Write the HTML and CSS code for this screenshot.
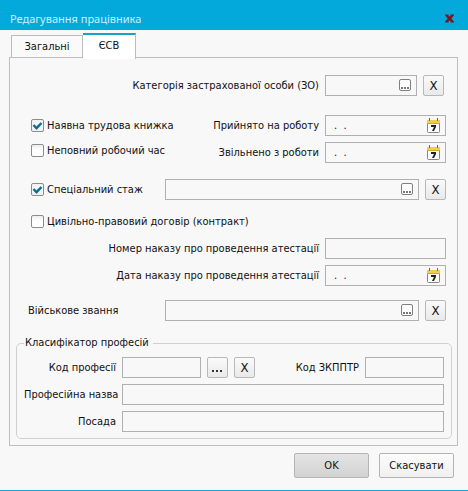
FILE: index.html
```html
<!DOCTYPE html>
<html lang="uk">
<head>
<meta charset="utf-8">
<title>Редагування працівника</title>
<link rel="stylesheet" href="styles.css">
</head>
<body>
<svg class="defs" aria-hidden="true">
  <symbol id="calendar" viewBox="0 0 14 17">
    <rect x="0.5" y="3.5" width="12" height="12" rx="1" fill="#fdfdfd" stroke="#858585"/>
    <path d="M0 3h13v3H0z" fill="#f0cc50"/>
    <path d="M0 6h13v1H0z" fill="#d0a63a"/>
    <path d="M2 1h1v3H2zM10 1h1v3h-1z" fill="#75683f"/>
    <path d="M4 8h5v2L7 14H5l2-4H4z" fill="#222"/>
  </symbol>
  <symbol id="dots" viewBox="0 0 13 13">
    <rect x="0.5" y="0.5" width="11" height="11" rx="1.5" fill="#fdfdfd" stroke="#808080"/>
    <path d="M2 8h2v2H2zM5 8h2v2H5zM8 8h2v2H8z" fill="#777"/>
  </symbol>
</svg>
<form class="window">
  <header class="titlebar">
    <h1>Редагування працівника</h1>
    <button type="button" class="close" aria-label="Закрити"><svg viewBox="0 0 10 9"><path d="M0 0h4v2h2V0h4v1L7 4.500 10 8v1H6V7H4v2H0V8l3-3.500L0 1z"/></svg></button>
  </header>
  <nav class="tabs" role="tablist">
    <button type="button" role="tab" class="tab">Загальні</button>
    <button type="button" role="tab" class="tab active" aria-selected="true">ЄСВ</button>
  </nav>
  <main class="panel">
    <div class="row category">
      <label class="text end" for="category">Категорія застрахованої особи (ЗО)</label>
      <div class="field short"><input id="category" type="text"><button type="button" aria-label="Вибрати"><svg class="dots"><use href="#dots"/></svg></button></div>
      <button type="button" class="square">X</button>
    </div>
    <div class="work">
      <div class="checks">
        <label class="check"><input type="checkbox" checked>Наявна трудова книжка</label>
        <label class="check"><input type="checkbox">Неповний робочий час</label>
      </div>
      <div class="dates">
        <div class="row">
          <label class="text end" for="hired">Прийнято на роботу</label>
          <div class="field date"><input id="hired" type="text" value=".  ."><button type="button" aria-label="Календар"><svg class="calendar"><use href="#calendar"/></svg></button></div>
        </div>
        <div class="row">
          <label class="text end" for="fired">Звільнено з роботи</label>
          <div class="field date"><input id="fired" type="text" value=".  ."><button type="button" aria-label="Календар"><svg class="calendar"><use href="#calendar"/></svg></button></div>
        </div>
      </div>
    </div>
    <div class="row special">
      <label class="check lead"><input type="checkbox" checked>Спеціальний стаж</label>
      <div class="field grow"><input type="text" aria-label="Спеціальний стаж"><button type="button" aria-label="Вибрати"><svg class="dots"><use href="#dots"/></svg></button></div>
      <button type="button" class="square">X</button>
    </div>
    <div class="orders">
      <div class="row">
        <label class="check"><input type="checkbox">Цивільно-правовий договір (контракт)</label>
      </div>
      <div class="row">
        <label class="text end" for="number">Номер наказу про проведення атестації</label>
        <div class="field date"><input id="number" type="text"></div>
      </div>
      <div class="row">
        <label class="text end" for="orderdate">Дата наказу про проведення атестації</label>
        <div class="field date"><input id="orderdate" type="text" value=".  ."><button type="button" aria-label="Календар"><svg class="calendar"><use href="#calendar"/></svg></button></div>
      </div>
    </div>
    <div class="row rank">
      <label class="text lead" for="rank">Військове звання</label>
      <div class="field grow"><input id="rank" type="text"><button type="button" aria-label="Вибрати"><svg class="dots"><use href="#dots"/></svg></button></div>
      <button type="button" class="square">X</button>
    </div>
    <fieldset class="group">
      <legend>Класифікатор професій</legend>
      <div class="stack">
        <div class="row">
          <label class="text name" for="code">Код професії</label>
          <div class="field code"><input id="code" type="text"></div>
          <button type="button" class="square ellipsis" aria-label="Вибрати"><svg viewBox="0 0 11 2"><path d="M0 0h2v2H0zM4 0h2v2H4zM8 0h2v2H8z"/></svg></button>
          <button type="button" class="square">X</button>
          <label class="text end" for="zkpptr">Код ЗКППТР</label>
          <div class="field code"><input id="zkpptr" type="text"></div>
        </div>
        <div class="row">
          <label class="text name" for="profname">Професійна назва</label>
          <div class="field grow"><input id="profname" type="text"></div>
        </div>
        <div class="row">
          <label class="text name" for="position">Посада</label>
          <div class="field grow"><input id="position" type="text"></div>
        </div>
      </div>
    </fieldset>
  </main>
  <footer class="actions">
    <button type="submit" class="action default">OK</button>
    <button type="button" class="action">Скасувати</button>
  </footer>
</form>
</body>
</html>
```
FILE: styles.css
```css
* {
  box-sizing: border-box;
}

body {
  margin: 0;
  background: #f8f8f8;
}

body,
button,
input {
  font: 11px/16px "DejaVu Sans Condensed", "DejaVu Sans", sans-serif;
  color: #111;
}

button,
input {
  margin: 0;
  padding: 0;
}

.defs {
  display: none;
}

.window {
  display: flex;
  flex-direction: column;
  min-height: 100vh;
  border-bottom: 1px solid #18a8d4;
}

.titlebar {
  display: flex;
  align-items: center;
  justify-content: space-between;
  height: 30px;
  padding: 7px 14px 0 10px;
  background: #04a9dc;
}

.titlebar h1 {
  margin: 0;
  font: 11px/16px "Noto Sans", sans-serif;
  color: #c8f0fc;
}

.close {
  display: flex;
  border: 0;
  background: none;
}

.close svg {
  width: 9px;
  height: 9px;
  fill: #7a1420;
}

.tabs {
  display: flex;
  align-items: flex-end;
  height: 28px;
  padding-left: 11px;
}

.tab {
  width: 72px;
  height: 23px;
  border: 1px solid #bcbcbc;
  border-bottom: 0;
  background: #fafafa;
}

.tab.active {
  position: relative;
  width: 53px;
  height: 26px;
  margin-bottom: -1px;
  padding-bottom: 3px;
  border-top: 2px solid #1a9fc8;
  border-left: 0;
  background: #fff;
}

.panel {
  margin: -1px 10px 0 9px;
  padding: 17px 11px 6px 6px;
  border: 1px solid #bebebe;
}

.row {
  display: flex;
  align-items: center;
  gap: 6px;
  min-height: 21px;
}

.text {
  white-space: nowrap;
}

.end {
  margin-left: auto;
}

.category {
  padding-right: 2px;
}

.work {
  display: flex;
  justify-content: space-between;
  margin-top: 19px;
}

.checks {
  display: flex;
  flex-direction: column;
  gap: 4px;
}

.dates,
.orders,
.stack {
  display: flex;
  flex-direction: column;
  gap: 6px;
}

.special {
  margin-top: 16px;
}

.orders {
  margin-top: 11px;
}

.rank {
  margin-top: 14px;
}

.check {
  display: flex;
  align-items: center;
  gap: 3px;
  min-height: 21px;
  padding-left: 15px;
  white-space: nowrap;
}

.check input {
  appearance: none;
  width: 13px;
  height: 13px;
  border: 1px solid #8c8c8c;
  border-radius: 2px;
  background: linear-gradient(#eee, #fff 50%);
}

.check input:checked {
  background: url("data:image/svg+xml,%3Csvg xmlns='http://www.w3.org/2000/svg' viewBox='0 0 11 11'%3E%3Cpath d='M1.500 5l3 3.200L9.500 3' fill='none' stroke='%23086e94' stroke-width='2.400'/%3E%3C/svg%3E") #f4f4f4;
}

.lead {
  width: 143px;
}

.text.lead {
  padding-left: 12px;
}

.field {
  display: flex;
  align-items: center;
  height: 21px;
  padding-right: 4px;
  border: 1px solid #b0b0b0;
}

.field input {
  flex: 1;
  min-width: 0;
  height: 19px;
  padding-left: 8px;
  border: 0;
  outline: 0;
  background: none;
}

.field button {
  display: flex;
  border: 0;
  background: none;
}

.dots {
  width: 13px;
  height: 13px;
}

.calendar {
  width: 14px;
  height: 17px;
}

.short {
  width: 92px;
}

.date {
  width: 121px;
}

.code {
  width: 79px;
}

.grow {
  flex: 1;
}

.square {
  width: 21px;
  height: 21px;
  border: 1px solid #b8b8b8;
  border-radius: 2px;
  background: linear-gradient(#fafafa, #e9e9e9);
  font-size: 13px;
}

.ellipsis {
  display: flex;
  align-items: flex-end;
  justify-content: center;
  padding-bottom: 5px;
}

.ellipsis svg {
  width: 11px;
  height: 2px;
  fill: #333;
}

.group {
  min-width: 0;
  margin: 14px -6px 0 0;
  padding: 6px 7px 6px 7px;
  border: 1px solid #d0d0d0;
  border-radius: 5px;
}

.group legend {
  padding: 0 4px 0 1px;
}

.name {
  width: 92px;
  text-align: right;
}

.actions {
  display: flex;
  justify-content: flex-end;
  gap: 10px;
  padding: 7px 14px 11px;
}

.action {
  width: 75px;
  height: 25px;
  border: 1px solid #b4b4b4;
  border-radius: 2px;
  background: linear-gradient(#fcfcfc, #f0f0f0);
}

.action.default {
  background: linear-gradient(#e4e4e4, #d2d2d2);
}
```
